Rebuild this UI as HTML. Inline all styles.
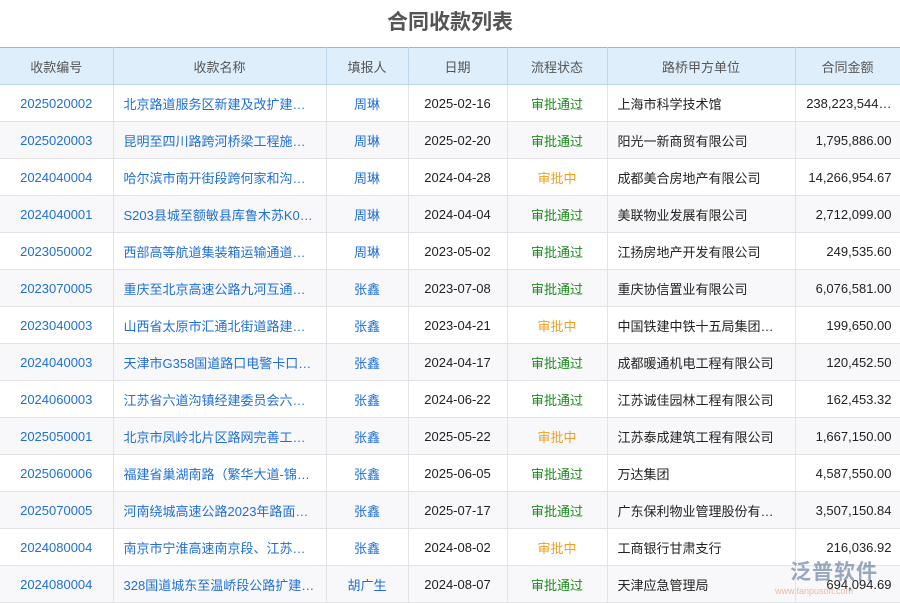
<!DOCTYPE html>
<html><head><meta charset="utf-8"><style>
body{margin:0;width:900px;height:600px;overflow:hidden;background:#fff;font-family:"Liberation Sans","Noto Sans CJK SC",sans-serif;position:relative}
h1{margin:0;height:47px;line-height:46px;text-align:center;font-size:21px;color:#555;font-weight:bold}
table{border-collapse:collapse;table-layout:fixed;width:900px;font-size:13px}
th,td{padding:0}
th{background:#deeefb;color:#555;font-weight:normal;height:36px;border-top:1px solid #8dbbe6;border-bottom:1px solid #b9d4ee;border-right:1px solid #bcd6ef}
td{height:36px;border-bottom:1px solid #e3e3e6;border-right:1px solid #e3e3e6;white-space:nowrap;overflow:hidden;color:#222}
tr:nth-child(odd) td{background:#f8f8fa}
td.c{text-align:center}
td.b{color:#1f6fd6}
td.n{padding-left:10px;color:#1f6fd6}
td.u{padding-left:10px}
td.r{text-align:right;padding-right:8px}
.g{color:#1e8a1e}.o{color:#f0a020}
.wm{position:absolute;left:790px;top:556px;font-size:21px;color:rgba(70,100,140,.55);font-weight:bold;letter-spacing:1px}
.wm2{position:absolute;left:775px;top:586px;font-size:9px;color:rgba(220,120,80,.5)}
</style></head><body>
<h1>合同收款列表</h1>
<table>
<colgroup><col style="width:113px"><col style="width:213px"><col style="width:82px"><col style="width:99px"><col style="width:100px"><col style="width:188px"><col style="width:105px"></colgroup>
<tr><th>收款编号</th><th>收款名称</th><th>填报人</th><th>日期</th><th>流程状态</th><th>路桥甲方单位</th><th>合同金额</th></tr>
<tr><td class="c b">2025020002</td><td class="n">北京路道服务区新建及改扩建…</td><td class="c b">周琳</td><td class="c">2025-02-16</td><td class="c g">审批通过</td><td class="u">上海市科学技术馆</td><td class="r">238,223,544…</td></tr>
<tr><td class="c b">2025020003</td><td class="n">昆明至四川路跨河桥梁工程施…</td><td class="c b">周琳</td><td class="c">2025-02-20</td><td class="c g">审批通过</td><td class="u">阳光一新商贸有限公司</td><td class="r">1,795,886.00</td></tr>
<tr><td class="c b">2024040004</td><td class="n">哈尔滨市南开街段跨何家和沟…</td><td class="c b">周琳</td><td class="c">2024-04-28</td><td class="c o">审批中</td><td class="u">成都美合房地产有限公司</td><td class="r">14,266,954.67</td></tr>
<tr><td class="c b">2024040001</td><td class="n">S203县城至额敏县库鲁木苏K0…</td><td class="c b">周琳</td><td class="c">2024-04-04</td><td class="c g">审批通过</td><td class="u">美联物业发展有限公司</td><td class="r">2,712,099.00</td></tr>
<tr><td class="c b">2023050002</td><td class="n">西部高等航道集装箱运输通道…</td><td class="c b">周琳</td><td class="c">2023-05-02</td><td class="c g">审批通过</td><td class="u">江扬房地产开发有限公司</td><td class="r">249,535.60</td></tr>
<tr><td class="c b">2023070005</td><td class="n">重庆至北京高速公路九河互通…</td><td class="c b">张鑫</td><td class="c">2023-07-08</td><td class="c g">审批通过</td><td class="u">重庆协信置业有限公司</td><td class="r">6,076,581.00</td></tr>
<tr><td class="c b">2023040003</td><td class="n">山西省太原市汇通北街道路建…</td><td class="c b">张鑫</td><td class="c">2023-04-21</td><td class="c o">审批中</td><td class="u">中国铁建中铁十五局集团…</td><td class="r">199,650.00</td></tr>
<tr><td class="c b">2024040003</td><td class="n">天津市G358国道路口电警卡口…</td><td class="c b">张鑫</td><td class="c">2024-04-17</td><td class="c g">审批通过</td><td class="u">成都暖通机电工程有限公司</td><td class="r">120,452.50</td></tr>
<tr><td class="c b">2024060003</td><td class="n">江苏省六道沟镇经建委员会六…</td><td class="c b">张鑫</td><td class="c">2024-06-22</td><td class="c g">审批通过</td><td class="u">江苏诚佳园林工程有限公司</td><td class="r">162,453.32</td></tr>
<tr><td class="c b">2025050001</td><td class="n">北京市凤岭北片区路网完善工…</td><td class="c b">张鑫</td><td class="c">2025-05-22</td><td class="c o">审批中</td><td class="u">江苏泰成建筑工程有限公司</td><td class="r">1,667,150.00</td></tr>
<tr><td class="c b">2025060006</td><td class="n">福建省巢湖南路（繁华大道-锦…</td><td class="c b">张鑫</td><td class="c">2025-06-05</td><td class="c g">审批通过</td><td class="u">万达集团</td><td class="r">4,587,550.00</td></tr>
<tr><td class="c b">2025070005</td><td class="n">河南绕城高速公路2023年路面…</td><td class="c b">张鑫</td><td class="c">2025-07-17</td><td class="c g">审批通过</td><td class="u">广东保利物业管理股份有…</td><td class="r">3,507,150.84</td></tr>
<tr><td class="c b">2024080004</td><td class="n">南京市宁淮高速南京段、江苏…</td><td class="c b">张鑫</td><td class="c">2024-08-02</td><td class="c o">审批中</td><td class="u">工商银行甘肃支行</td><td class="r">216,036.92</td></tr>
<tr><td class="c b">2024080004</td><td class="n">328国道城东至温峤段公路扩建…</td><td class="c b">胡广生</td><td class="c">2024-08-07</td><td class="c g">审批通过</td><td class="u">天津应急管理局</td><td class="r">694,094.69</td></tr>
</table>
<div class="wm">泛普软件</div><div class="wm2">www.fanpusoft.com</div>
</body></html>
